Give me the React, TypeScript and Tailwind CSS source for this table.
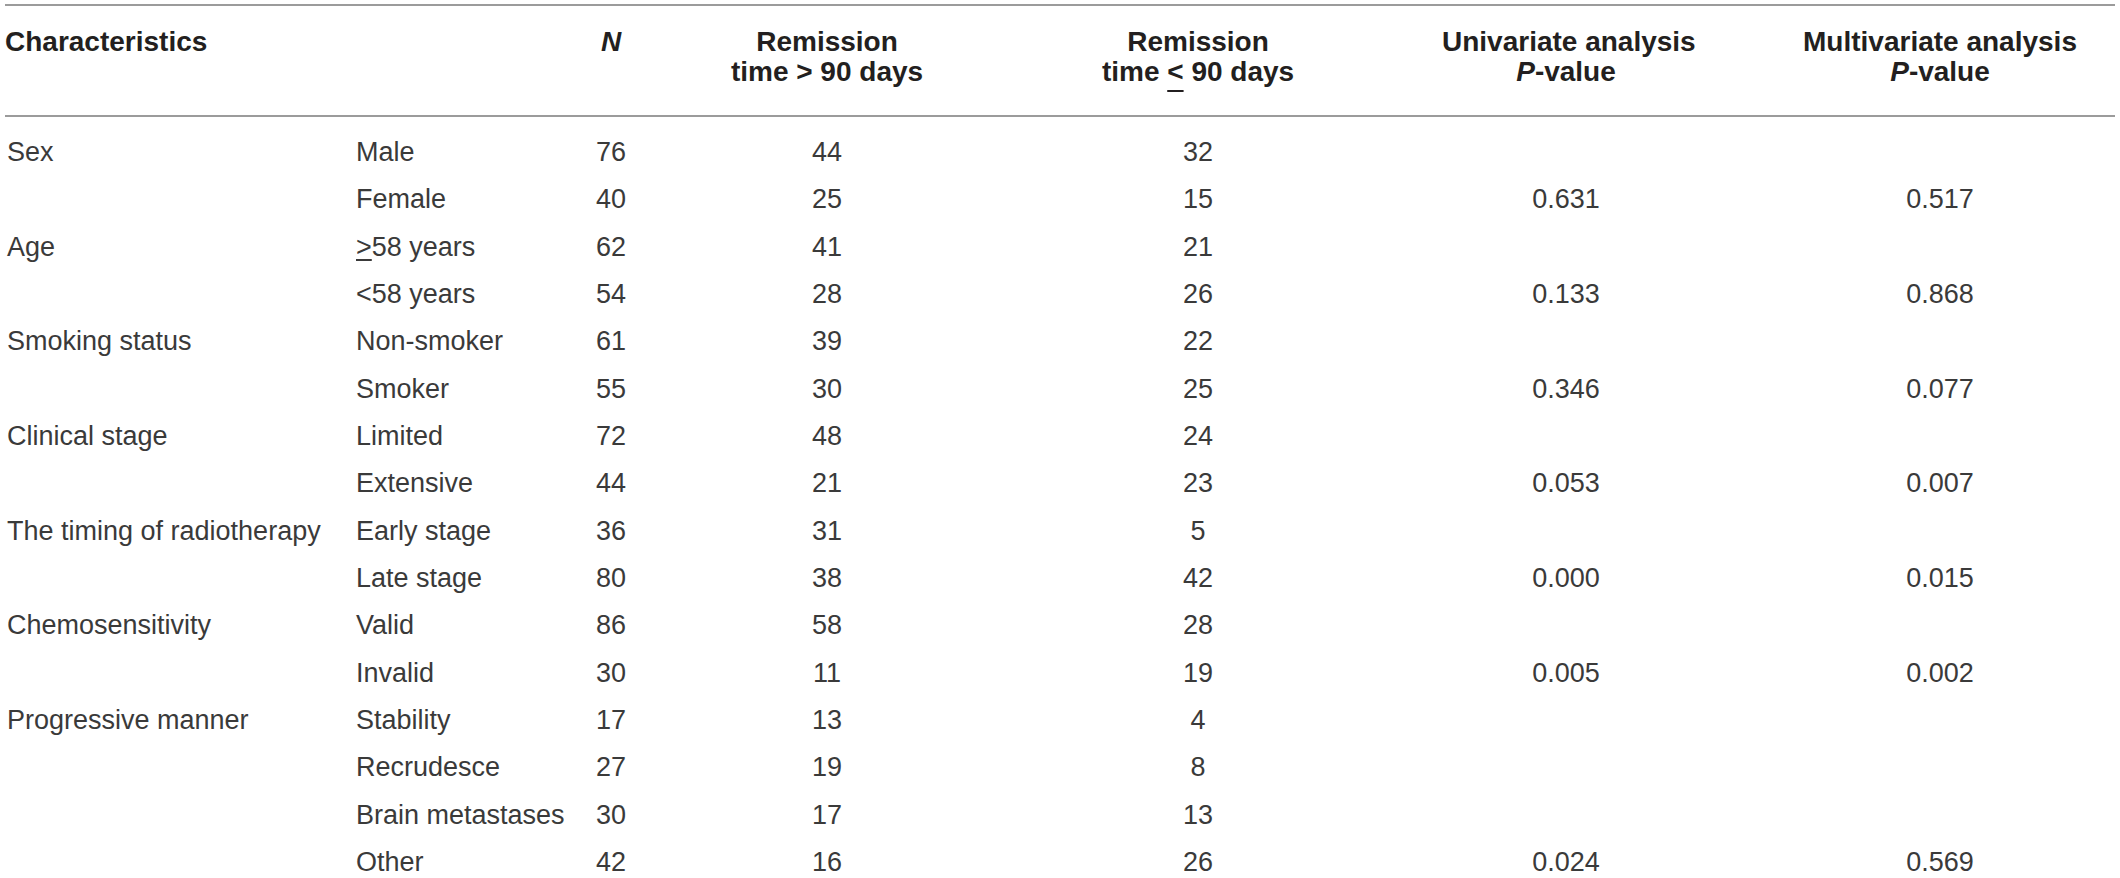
import React from "react";

type Row = {
  a: string;
  b: React.ReactNode;
  n: string;
  gt: string;
  le: string;
  uni: string;
  multi: string;
};

const ge = (
  <>
    <span className="underline decoration-[1.5px] underline-offset-[3px]">&gt;</span>58 years
  </>
);

const rows: Row[] = [
  { a: "Sex", b: "Male", n: "76", gt: "44", le: "32", uni: "", multi: "" },
  { a: "", b: "Female", n: "40", gt: "25", le: "15", uni: "0.631", multi: "0.517" },
  { a: "Age", b: ge, n: "62", gt: "41", le: "21", uni: "", multi: "" },
  { a: "", b: "<58 years", n: "54", gt: "28", le: "26", uni: "0.133", multi: "0.868" },
  { a: "Smoking status", b: "Non-smoker", n: "61", gt: "39", le: "22", uni: "", multi: "" },
  { a: "", b: "Smoker", n: "55", gt: "30", le: "25", uni: "0.346", multi: "0.077" },
  { a: "Clinical stage", b: "Limited", n: "72", gt: "48", le: "24", uni: "", multi: "" },
  { a: "", b: "Extensive", n: "44", gt: "21", le: "23", uni: "0.053", multi: "0.007" },
  { a: "The timing of radiotherapy", b: "Early stage", n: "36", gt: "31", le: "5", uni: "", multi: "" },
  { a: "", b: "Late stage", n: "80", gt: "38", le: "42", uni: "0.000", multi: "0.015" },
  { a: "Chemosensitivity", b: "Valid", n: "86", gt: "58", le: "28", uni: "", multi: "" },
  { a: "", b: "Invalid", n: "30", gt: "11", le: "19", uni: "0.005", multi: "0.002" },
  { a: "Progressive manner", b: "Stability", n: "17", gt: "13", le: "4", uni: "", multi: "" },
  { a: "", b: "Recrudesce", n: "27", gt: "19", le: "8", uni: "", multi: "" },
  { a: "", b: "Brain metastases", n: "30", gt: "17", le: "13", uni: "", multi: "" },
  { a: "", b: "Other", n: "42", gt: "16", le: "26", uni: "0.024", multi: "0.569" },
];

const grid =
  "grid grid-cols-[351px_240px_104px_254px_488px_248px_425px]";

export default function App() {
  return (
    <div className="min-h-screen bg-white font-['Liberation_Sans',Arial,sans-serif]">
      <div className="ml-[5px] mt-[4px] w-[2110px]">
        {/* Header */}
        <div
          className={`${grid} border-t-2 border-b-2 border-[#9b9b9b] pt-[21px] pb-[28px] text-[28px] leading-[30px] font-bold text-[#231f20]`}
        >
          <div className="whitespace-nowrap">Characteristics</div>
          <div></div>
          <div className="pl-[5px] italic">N</div>
          <div className="text-center whitespace-nowrap">
            <div>Remission</div>
            <div>time &gt; 90 days</div>
          </div>
          <div className="text-center whitespace-nowrap">
            <div>Remission</div>
            <div>
              time{" "}
              <span className="underline decoration-2 underline-offset-[9px]">&lt;</span>{" "}
              90 days
            </div>
          </div>
          <div className="text-center whitespace-nowrap">
            <div>Univariate analysis</div>
            <div>
              <span className="italic">P</span>-value
            </div>
          </div>
          <div className="pl-[75px] text-center whitespace-nowrap">
            <div>Multivariate analysis</div>
            <div>
              <span className="italic">P</span>-value
            </div>
          </div>
        </div>

        {/* Body */}
        <div className="pt-[12px] border-b-2 border-[#9b9b9b] text-[27px] text-[#3a3a3a]">
          {rows.map((r, i) => (
            <div key={i} className={`${grid} h-[47.33px] leading-[47.33px]`}>
              <div className="pl-[2px] whitespace-nowrap">{r.a}</div>
              <div className="whitespace-nowrap">{r.b}</div>
              <div>{r.n}</div>
              <div className="text-center">{r.gt}</div>
              <div className="text-center">{r.le}</div>
              <div className="text-center">{r.uni}</div>
              <div className="pl-[75px] text-center">{r.multi}</div>
            </div>
          ))}
        </div>
      </div>
    </div>
  );
}
